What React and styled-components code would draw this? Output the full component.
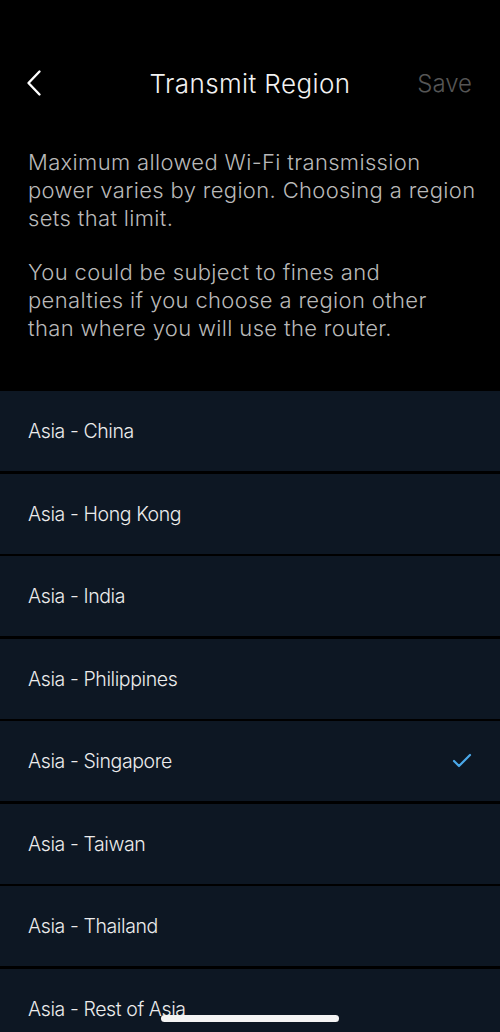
import React from 'react'
import styled, { createGlobalStyle } from 'styled-components'

const GlobalStyle = createGlobalStyle`
  html, body {
    margin: 0;
    padding: 0;
    background: #000;
  }
  body {
    font-family: Inter, "Noto Sans", sans-serif;
    -webkit-font-smoothing: antialiased;
  }
`

const Screen = styled.div`
  position: relative;
  width: 500px;
  height: 1032px;
  overflow: hidden;
  background: #000;
`

const Header = styled.div`
  padding-top: 48px;
  box-sizing: border-box;
  display: grid;
  grid-template-columns: 90px 1fr 90px;
  align-items: center;
  height: 118px;
`

const BackButton = styled.button`
  background: none;
  border: none;
  padding: 0 0 0 26px;
  display: flex;
  align-items: center;
  cursor: pointer;
`

const Title = styled.div`
  text-align: center;
  color: #f2f2f2;
  font-size: 26px;
  font-weight: 300;
  letter-spacing: 0.4px;
`

const Save = styled.div`
  text-align: right;
  padding-right: 28px;
  color: #555;
  font-size: 24px;
  font-weight: 300;
`

const Description = styled.div`
  padding: 30px 23px 49px 28px;
  color: #b9b9b9;
  font-size: 22px;
  font-weight: 300;
  line-height: 28px;
  letter-spacing: 0.35px;
`

const Para = styled.p`
  margin: 0 0 26px;
  &:last-child {
    margin-bottom: 0;
  }
`

const List = styled.div`
  display: flex;
  flex-direction: column;
  gap: 2.5px;
`

const Row = styled.div`
  height: 80px;
  background: #0d1723;
  display: flex;
  align-items: center;
  justify-content: space-between;
  padding: 0 28px;
  color: #ececec;
  font-size: 19.5px;
  font-weight: 300;
  letter-spacing: -0.4px;
`

const HomeBar = styled.div`
  position: absolute;
  left: 161px;
  bottom: 10px;
  width: 178px;
  height: 7px;
  border-radius: 4px;
  background: #f4f4f4;
`

const regions = [
  'Asia - China',
  'Asia - Hong Kong',
  'Asia - India',
  'Asia - Philippines',
  'Asia - Singapore',
  'Asia - Taiwan',
  'Asia - Thailand',
  'Asia - Rest of Asia',
]

export default function App() {
  const selected = 'Asia - Singapore'

  return (
    <Screen>
      <GlobalStyle />
      <Header>
        <BackButton>
          <svg width="16" height="28" viewBox="0 0 16 28">
            <path d="M13.5 2.5 L2.5 14 L13.5 25.5" fill="none" stroke="#fff" strokeWidth="2.4" strokeLinecap="round" strokeLinejoin="round" />
          </svg>
        </BackButton>
        <Title>Transmit Region</Title>
        <Save>Save</Save>
      </Header>
      <Description>
        <Para>Maximum allowed Wi-Fi transmission power varies by region. Choosing a region sets that limit.</Para>
        <Para>You could be subject to fines and penalties if you choose a region other than where you will use the router.</Para>
      </Description>
      <List>
        {regions.map((r) => (
          <Row key={r}>
            <span>{r}</span>
            {r === selected && (
              <svg width="20" height="16" viewBox="0 0 20 16">
                <path d="M2 8 L7 13 L18 2" fill="none" stroke="#4aa8e8" strokeWidth="2.2" strokeLinecap="round" strokeLinejoin="round" />
              </svg>
            )}
          </Row>
        ))}
      </List>
      <HomeBar />
    </Screen>
  )
}
